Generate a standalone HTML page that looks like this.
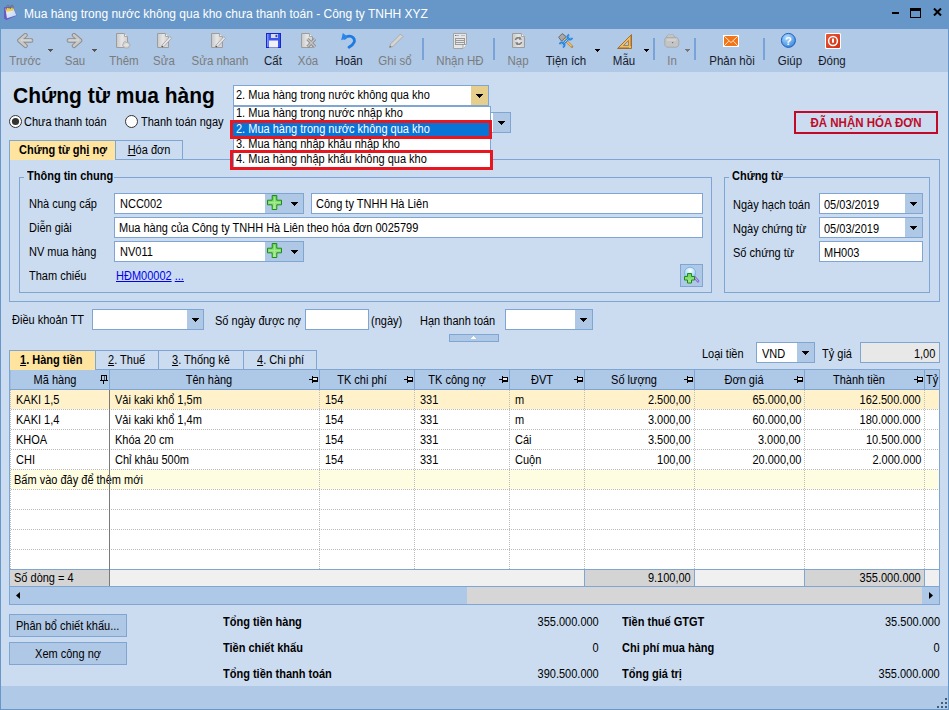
<!DOCTYPE html>
<html><head><meta charset="utf-8">
<style>
*{box-sizing:border-box;margin:0;padding:0}
html,body{width:949px;height:710px;overflow:hidden;background:#CBDCF0;font-family:"Liberation Sans",sans-serif;font-size:11px;color:#000;position:relative}
.a{position:absolute}
.t{position:absolute;white-space:nowrap}
u{text-decoration:underline}
</style></head>
<body>
<div class="a" style="left:0px;top:0px;width:949px;height:29px;background:#6797C8;"></div>
<div class="t" style="left:24px;top:6.84px;font-size:12px;line-height:14px;transform:scaleX(1.0000);transform-origin:0 0;color:#fff;">Mua hàng trong nước không qua kho chưa thanh toán - Công ty TNHH XYZ</div>
<svg class="a" style="left:0px;top:0px" width="20" height="22" viewBox="0 0 20 22"><defs><linearGradient id="pg" x1="0" y1="0" x2="1" y2="1"><stop offset="0" stop-color="#F4F8FF"/><stop offset="1" stop-color="#B8D4F4"/></linearGradient></defs><path d="M4 7.2L12.6 6.4L16.8 15.6L6.4 19.9L4.1 18.6Z" fill="#6A58C8"/><path d="M5.6 8.6L13 7.8L16.4 15.2L6.9 18.2Z" fill="url(#pg)"/><path d="M5.6 8.6L13 7.8L13.9 10.6L6 11.8Z" fill="#F2CC48"/><path d="M6.6 9.5C6 7 6.6 5.2 8 5.2C9.2 5.2 9.4 7 9 8.8M10.6 9C10.2 6.8 10.8 5 12 5C13.2 5 13.4 6.8 13 8.6" fill="none" stroke="#707070" stroke-width="0.9"/></svg>
<div class="a" style="left:892px;top:12px;width:7px;height:2px;background:#000;"></div>
<div class="a" style="left:910px;top:8px;width:11px;height:10px;border:1px solid #000;border-top-width:3px"></div>
<svg class="a" style="left:933px;top:8px" width="9" height="8" viewBox="0 0 9 8"><path d="M1 0.5L8 7.5M8 0.5L1 7.5" stroke="#000" stroke-width="2"/></svg>
<div class="a" style="left:0px;top:29px;width:949px;height:43px;background:#AFC9E7;"></div>
<div class="t" style="left:-75.5px;width:200px;text-align:center;top:53.77px;font-size:12.5px;line-height:15px;transform:scaleX(0.9200);transform-origin:50% 0;color:#7C7C7C;">Trước</div>
<div class="t" style="left:-25px;width:200px;text-align:center;top:53.77px;font-size:12.5px;line-height:15px;transform:scaleX(0.9200);transform-origin:50% 0;color:#7C7C7C;">Sau</div>
<div class="t" style="left:24.299999999999997px;width:200px;text-align:center;top:53.77px;font-size:12.5px;line-height:15px;transform:scaleX(0.9200);transform-origin:50% 0;color:#7C7C7C;">Thêm</div>
<div class="t" style="left:64px;width:200px;text-align:center;top:53.77px;font-size:12.5px;line-height:15px;transform:scaleX(0.9200);transform-origin:50% 0;color:#7C7C7C;">Sửa</div>
<div class="t" style="left:119.5px;width:200px;text-align:center;top:53.77px;font-size:12.5px;line-height:15px;transform:scaleX(0.9200);transform-origin:50% 0;color:#7C7C7C;">Sửa nhanh</div>
<div class="t" style="left:172.5px;width:200px;text-align:center;top:53.77px;font-size:12.5px;line-height:15px;transform:scaleX(0.9200);transform-origin:50% 0;color:#1A1A2A;">Cất</div>
<div class="t" style="left:207.5px;width:200px;text-align:center;top:53.77px;font-size:12.5px;line-height:15px;transform:scaleX(0.9200);transform-origin:50% 0;color:#7C7C7C;">Xóa</div>
<div class="t" style="left:248.7px;width:200px;text-align:center;top:53.77px;font-size:12.5px;line-height:15px;transform:scaleX(0.9200);transform-origin:50% 0;color:#1A1A2A;">Hoãn</div>
<div class="t" style="left:295px;width:200px;text-align:center;top:53.77px;font-size:12.5px;line-height:15px;transform:scaleX(0.9200);transform-origin:50% 0;color:#7C7C7C;">Ghi sổ</div>
<div class="t" style="left:360px;width:200px;text-align:center;top:53.77px;font-size:12.5px;line-height:15px;transform:scaleX(0.9200);transform-origin:50% 0;color:#7C7C7C;">Nhận HĐ</div>
<div class="t" style="left:418px;width:200px;text-align:center;top:53.77px;font-size:12.5px;line-height:15px;transform:scaleX(0.9200);transform-origin:50% 0;color:#7C7C7C;">Nạp</div>
<div class="t" style="left:466px;width:200px;text-align:center;top:53.77px;font-size:12.5px;line-height:15px;transform:scaleX(0.9200);transform-origin:50% 0;color:#1A1A2A;">Tiện ích</div>
<div class="t" style="left:524px;width:200px;text-align:center;top:53.77px;font-size:12.5px;line-height:15px;transform:scaleX(0.9200);transform-origin:50% 0;color:#1A1A2A;">Mẫu</div>
<div class="t" style="left:571.7px;width:200px;text-align:center;top:53.77px;font-size:12.5px;line-height:15px;transform:scaleX(0.9200);transform-origin:50% 0;color:#7C7C7C;">In</div>
<div class="t" style="left:631.6px;width:200px;text-align:center;top:53.77px;font-size:12.5px;line-height:15px;transform:scaleX(0.9200);transform-origin:50% 0;color:#1A1A2A;">Phản hồi</div>
<div class="t" style="left:689.5px;width:200px;text-align:center;top:53.77px;font-size:12.5px;line-height:15px;transform:scaleX(0.9200);transform-origin:50% 0;color:#1A1A2A;">Giúp</div>
<div class="t" style="left:732px;width:200px;text-align:center;top:53.77px;font-size:12.5px;line-height:15px;transform:scaleX(0.9200);transform-origin:50% 0;color:#1A1A2A;">Đóng</div>
<svg class="a" style="left:48px;top:49px" width="5" height="3" shape-rendering="crispEdges"><rect x="0" y="0" width="5" height="1" fill="#555"/><rect x="1" y="1" width="3" height="1" fill="#555"/><rect x="2" y="2" width="1" height="1" fill="#555"/></svg>
<svg class="a" style="left:92px;top:49px" width="5" height="3" shape-rendering="crispEdges"><rect x="0" y="0" width="5" height="1" fill="#555"/><rect x="1" y="1" width="3" height="1" fill="#555"/><rect x="2" y="2" width="1" height="1" fill="#555"/></svg>
<svg class="a" style="left:595px;top:49px" width="5" height="3" shape-rendering="crispEdges"><rect x="0" y="0" width="5" height="1" fill="#000"/><rect x="1" y="1" width="3" height="1" fill="#000"/><rect x="2" y="2" width="1" height="1" fill="#000"/></svg>
<svg class="a" style="left:644px;top:49px" width="5" height="3" shape-rendering="crispEdges"><rect x="0" y="0" width="5" height="1" fill="#000"/><rect x="1" y="1" width="3" height="1" fill="#000"/><rect x="2" y="2" width="1" height="1" fill="#000"/></svg>
<svg class="a" style="left:685px;top:49px" width="5" height="3" shape-rendering="crispEdges"><rect x="0" y="0" width="5" height="1" fill="#777"/><rect x="1" y="1" width="3" height="1" fill="#777"/><rect x="2" y="2" width="1" height="1" fill="#777"/></svg>
<div class="a" style="left:422px;top:38px;width:2px;height:22px;background:#78A2D8;"></div>
<div class="a" style="left:493px;top:38px;width:2px;height:22px;background:#78A2D8;"></div>
<div class="a" style="left:653px;top:38px;width:2px;height:22px;background:#78A2D8;"></div>
<div class="a" style="left:694px;top:38px;width:2px;height:22px;background:#78A2D8;"></div>
<div class="a" style="left:763px;top:38px;width:2px;height:22px;background:#78A2D8;"></div>
<svg class="a" style="left:17px;top:33px" width="17" height="16" viewBox="0 0 17 16"><path d="M8.5 2.2L2.4 7.5L8.5 12.8M2.4 7.5H14.2" fill="none" stroke="#8A8A8A" stroke-width="4.4" stroke-linecap="round" stroke-linejoin="round"/><path d="M8.5 2.2L2.4 7.5L8.5 12.8M2.4 7.5H14.2" fill="none" stroke="#C9C9C9" stroke-width="2.6" stroke-linecap="round" stroke-linejoin="round"/><path d="M4 7H14.2" stroke="#E6E6E6" stroke-width="0.8"/></svg>
<svg class="a" style="left:66px;top:33px" width="17" height="16" viewBox="0 0 17 16"><path d="M8 2.2L14.1 7.5L8 12.8M14.1 7.5H2.8" fill="none" stroke="#8A8A8A" stroke-width="4.4" stroke-linecap="round" stroke-linejoin="round"/><path d="M8 2.2L14.1 7.5L8 12.8M14.1 7.5H2.8" fill="none" stroke="#C9C9C9" stroke-width="2.6" stroke-linecap="round" stroke-linejoin="round"/><path d="M13 7H2.8" stroke="#E6E6E6" stroke-width="0.8"/></svg>
<svg class="a" style="left:116px;top:33px" width="16" height="16" viewBox="0 0 16 16"><defs><linearGradient id="dg" x1="0" x2="1"><stop offset="0" stop-color="#C8C8C8"/><stop offset="0.5" stop-color="#E6E6E6"/><stop offset="1" stop-color="#CFCFCF"/></linearGradient></defs><path d="M0.5 0.5H8.5L11.5 3.5V14.5H0.5Z" fill="url(#dg)" stroke="#9C9C9C"/><path d="M8.5 0.5V3.5H11.5" fill="#F2F2F2" stroke="#A8A8A8"/><path d="M7.5 9.5L9 8.5L10.5 9.5L12.5 9L13 11L14.5 12L13 13.5L12.5 15H9L7.5 14L6.5 12.5Z" fill="#CFCFCF" stroke="#A6A6A6" stroke-width="0.7"/><ellipse cx="10.5" cy="12" rx="2.3" ry="1.8" fill="#E2E2E2"/></svg>
<svg class="a" style="left:157px;top:33px" width="16" height="16" viewBox="0 0 16 16"><defs><linearGradient id="dg" x1="0" x2="1"><stop offset="0" stop-color="#C8C8C8"/><stop offset="0.5" stop-color="#E6E6E6"/><stop offset="1" stop-color="#CFCFCF"/></linearGradient></defs><path d="M0.5 0.5H8.5L11.5 3.5V14.5H0.5Z" fill="url(#dg)" stroke="#9C9C9C"/><path d="M8.5 0.5V3.5H11.5" fill="#F2F2F2" stroke="#A8A8A8"/><path d="M5 12.2L12.8 3.6L14.6 5.2L6.8 13.8L4.6 14.4Z" fill="#E4E4E4" stroke="#A0A0A0" stroke-width="0.8"/><circle cx="5.3" cy="13.6" r="0.8" fill="#555"/></svg>
<svg class="a" style="left:211px;top:33px" width="16" height="16" viewBox="0 0 16 16"><defs><linearGradient id="dg" x1="0" x2="1"><stop offset="0" stop-color="#C8C8C8"/><stop offset="0.5" stop-color="#E6E6E6"/><stop offset="1" stop-color="#CFCFCF"/></linearGradient></defs><path d="M0.5 0.5H8.5L11.5 3.5V14.5H0.5Z" fill="url(#dg)" stroke="#9C9C9C"/><path d="M8.5 0.5V3.5H11.5" fill="#F2F2F2" stroke="#A8A8A8"/><path d="M5 12.2L12.8 3.6L14.6 5.2L6.8 13.8L4.6 14.4Z" fill="#E4E4E4" stroke="#A0A0A0" stroke-width="0.8"/><circle cx="5.3" cy="13.6" r="0.8" fill="#555"/></svg>
<svg class="a" style="left:266px;top:33px" width="15" height="15" viewBox="0 0 15 15"><rect x="0.5" y="0.5" width="14" height="14" fill="#3A55EE" stroke="#1428C8"/><rect x="1" y="1" width="1.5" height="13" fill="#7D90F5"/><rect x="5" y="1" width="7" height="4" fill="#D9D9E4"/><rect x="9.5" y="1.8" width="1.8" height="2.4" fill="#2A45E0"/><rect x="3" y="7.5" width="9" height="7" fill="#F1F1F4"/></svg>
<svg class="a" style="left:301px;top:33px" width="16" height="16" viewBox="0 0 16 16"><defs><linearGradient id="dg" x1="0" x2="1"><stop offset="0" stop-color="#C8C8C8"/><stop offset="0.5" stop-color="#E6E6E6"/><stop offset="1" stop-color="#CFCFCF"/></linearGradient></defs><path d="M0.5 0.5H8.5L11.5 3.5V14.5H0.5Z" fill="url(#dg)" stroke="#9C9C9C"/><path d="M8.5 0.5V3.5H11.5" fill="#F2F2F2" stroke="#A8A8A8"/><path d="M6.5 6L14 13.8M14 6L6.5 13.8" stroke="#8C8C8C" stroke-width="3.2"/><path d="M6.5 6L14 13.8M14 6L6.5 13.8" stroke="#C4C4C4" stroke-width="1.4"/></svg>
<svg class="a" style="left:340px;top:32px" width="17" height="17" viewBox="0 0 17 17"><path d="M4.5 6.2C7 3.6 11 3.4 13.2 5.8C15.6 8.4 14.6 12.2 9 15.2" fill="none" stroke="#1E7BE0" stroke-width="2.8" stroke-linecap="round"/><path d="M1.2 8.3L2.8 1L8.6 5.4Z" fill="#2A86E8"/></svg>
<svg class="a" style="left:388px;top:33px" width="16" height="16" viewBox="0 0 16 16"><path d="M1.5 14.5L2.5 11L12.5 1L15 3.5L5 13.5Z" fill="#D4D4D4" stroke="#A6A6A6" stroke-width="0.9" stroke-linejoin="round"/><path d="M1.5 14.5L2 12.5L3.5 14Z" fill="#6A6A6A"/></svg>
<svg class="a" style="left:453px;top:33px" width="15" height="16" viewBox="0 0 15 16"><path d="M0.5 0.5H13.5V11.5L10 15.5H0.5Z" fill="#E6E6E6" stroke="#A4A4A4"/><path d="M10 15.5V11.5H13.5" fill="#F8F8F8" stroke="#A4A4A4"/><rect x="2" y="2" width="1.5" height="1" fill="#777"/><rect x="4.5" y="2" width="1" height="1" fill="#777"/><path d="M8 2.5H12" stroke="#BBB"/><rect x="2.5" y="5.5" width="9" height="6" fill="none" stroke="#9A9A9A"/><path d="M2.5 7.5H11.5M2.5 9.5H11.5" stroke="#9A9A9A"/></svg>
<svg class="a" style="left:512px;top:33px" width="14" height="16" viewBox="0 0 14 16"><defs><linearGradient id="dg" x1="0" x2="1"><stop offset="0" stop-color="#C8C8C8"/><stop offset="0.5" stop-color="#E6E6E6"/><stop offset="1" stop-color="#CFCFCF"/></linearGradient></defs><path d="M0.5 0.5H9.5L12.5 3.5V14.5H0.5Z" fill="url(#dg)" stroke="#9C9C9C"/><path d="M9.5 0.5V3.5H12.5" fill="#F2F2F2" stroke="#A8A8A8"/><path d="M3.5 7C3.8 4.8 6.8 4 8.6 5.6" fill="none" stroke="#7E7E7E" stroke-width="1.6"/><path d="M7.6 3.6L10 6.4L6.8 6.8Z" fill="#7E7E7E"/><path d="M9.5 9C9.2 11.2 6.2 12 4.4 10.4" fill="none" stroke="#7E7E7E" stroke-width="1.6"/><path d="M5.4 12.4L3 9.6L6.2 9.2Z" fill="#7E7E7E"/></svg>
<svg class="a" style="left:558px;top:33px" width="16" height="16" viewBox="0 0 16 16"><path d="M5 5L14 13.6" stroke="#B8863A" stroke-width="2.6" stroke-linecap="round"/><path d="M5 5L13.6 13.2" stroke="#F2C66C" stroke-width="1.2"/><path d="M0.6 4.2L4.2 0.6L8.2 3.6L3.6 8.2Z" fill="#A8A8A8" stroke="#5A5A5A" stroke-width="0.8" stroke-linejoin="round"/><path d="M4.2 11.8L11.8 4.2" stroke="#2E88E0" stroke-width="2.6"/><path d="M4.2 11.8L11.8 4.2" stroke="#B0DAFF" stroke-width="0.9"/><path d="M11.2 1.6A2.6 2.6 0 1 0 14.4 4.8" fill="none" stroke="#2E88E0" stroke-width="1.7"/><path d="M4.8 14.4A2.6 2.6 0 1 0 1.6 11.2" fill="none" stroke="#2E88E0" stroke-width="1.7"/></svg>
<svg class="a" style="left:617px;top:34px" width="15" height="15" viewBox="0 0 15 15"><path d="M0.5 14.5L14.5 0.5V14.5Z" fill="#EDBE6A" stroke="#A8702A"/><path d="M6.5 11.5L11.5 6.5V11.5Z" fill="#AFC9E7" stroke="#A8702A" stroke-width="0.8"/><path d="M3 14.5V13M5 14.5V13M7 14.5V13M9 14.5V13M11 14.5V13M14.5 11H13M14.5 9H13M14.5 7H13M14.5 5H13M14.5 3H13" stroke="#8A5A20" stroke-width="0.8"/></svg>
<svg class="a" style="left:664px;top:34px" width="16" height="15" viewBox="0 0 16 15"><path d="M2 3.5L4 0.8H9.5L10.5 3.5Z" fill="#CFCFCF" stroke="#A8A8A8" stroke-width="0.8"/><path d="M0.8 6C0.8 4 2 3.2 4 3.2H11C13.5 3.2 14.8 4.8 14.8 7.5V10C14.8 12 13.5 13.2 11.5 13.2H4C2 13.2 0.8 12 0.8 10Z" fill="#C4C4C4" stroke="#A2A2A2" stroke-width="0.8"/><path d="M3 6H12" stroke="#DADADA" stroke-width="1.2"/><rect x="8" y="8" width="1.2" height="1.2" fill="#777"/></svg>
<svg class="a" style="left:723px;top:35px" width="16" height="12" viewBox="0 0 16 12"><rect x="0" y="0" width="16" height="12" fill="#fff"/><rect x="1" y="1" width="14" height="10" fill="#F27418"/><path d="M1.2 1.2L8 7.6L14.8 1.2M1.2 10.8L5.6 6.2M14.8 10.8L10.4 6.2" fill="none" stroke="#FFE8D0" stroke-width="1"/></svg>
<svg class="a" style="left:780px;top:32px" width="17" height="17" viewBox="0 0 17 17"><defs><radialGradient id="hg" cx="0.4" cy="0.3" r="0.7"><stop offset="0" stop-color="#B8DEFF"/><stop offset="1" stop-color="#3A8AE0"/></radialGradient></defs><circle cx="8.4" cy="8.4" r="7" fill="url(#hg)" stroke="#1E5EBE" stroke-width="1"/><text x="8.4" y="12.6" text-anchor="middle" font-family="Liberation Sans" font-weight="bold" font-size="11" fill="#fff">?</text></svg>
<svg class="a" style="left:825px;top:33px" width="16" height="16" viewBox="0 0 16 16"><defs><linearGradient id="cg" x1="0" y1="0" x2="1" y2="1"><stop offset="0" stop-color="#E8553A"/><stop offset="1" stop-color="#D2300C"/></linearGradient></defs><rect x="0" y="0" width="16" height="16" rx="1.5" fill="#fff"/><rect x="1" y="1" width="14" height="14" rx="1" fill="url(#cg)"/><circle cx="8" cy="8" r="4.4" fill="none" stroke="#fff" stroke-width="1.5"/><rect x="7" y="5.6" width="2" height="4.2" rx="0.5" fill="#fff"/></svg>
<div class="a" style="left:0px;top:28px;width:1px;height:682px;background:#6797C8;"></div>
<div class="a" style="left:948px;top:28px;width:1px;height:682px;background:#6797C8;"></div>
<div class="t" style="left:13px;top:82.98px;font-size:22px;line-height:26px;transform:scaleX(0.9545);transform-origin:0 0;font-weight:bold;">Chứng từ mua hàng</div>
<svg class="a" style="left:9px;top:115px" width="14" height="14" viewBox="0 0 14 14"><circle cx="6.5" cy="6.5" r="6" fill="#fff" stroke="#333"/><circle cx="6.5" cy="6.5" r="3.6" fill="#333"/></svg>
<div class="t" style="left:24.2px;top:115.24px;font-size:12px;line-height:14px;transform:scaleX(0.9167);transform-origin:0 0;">Chưa thanh toán</div>
<svg class="a" style="left:125px;top:115px" width="14" height="14" viewBox="0 0 14 14"><circle cx="6.5" cy="6.5" r="6" fill="#fff" stroke="#333"/></svg>
<div class="t" style="left:141.3px;top:115.24px;font-size:12px;line-height:14px;transform:scaleX(0.9167);transform-origin:0 0;">Thanh toán ngay</div>
<div class="a" style="left:794px;top:111px;width:144px;height:23px;border:2px solid #C00A28;"></div>
<div class="t" style="left:766px;width:200px;text-align:center;top:115.97px;font-size:12.5px;line-height:15px;transform:scaleX(0.9200);transform-origin:50% 0;font-weight:bold;color:#C00A28;">ĐÃ NHẬN HÓA ĐƠN</div>
<div class="a" style="left:9px;top:159px;width:931px;height:143px;border:1px solid #7FA5D3;"></div>
<div class="a" style="left:9px;top:140px;width:107px;height:20px;background:#FFE4A0;border:1px solid #7FA5D3;border-bottom:none;border-right:none"></div>
<div class="a" style="left:115px;top:140px;width:68px;height:20px;background:#CBDCF0;border:1px solid #7FA5D3;"></div>
<div class="t" style="left:-37.5px;width:200px;text-align:center;top:142.94px;font-size:12px;line-height:14px;transform:scaleX(0.9167);transform-origin:50% 0;font-weight:bold;">Chứng từ gh<u>i</u> nợ</div>
<div class="t" style="left:49px;width:200px;text-align:center;top:143.34px;font-size:12px;line-height:14px;transform:scaleX(0.9167);transform-origin:50% 0;"><u>H</u>óa đơn</div>
<div class="a" style="left:19px;top:177px;width:693px;height:116px;border:1px solid #7FA5D3;"></div>
<div class="a" style="left:24px;top:170px;width:90px;height:12px;background:#CBDCF0;"></div>
<div class="t" style="left:26.6px;top:169.34px;font-size:12px;line-height:14px;transform:scaleX(0.9167);transform-origin:0 0;font-weight:bold;">Thông tin chung</div>
<div class="a" style="left:724px;top:177px;width:206px;height:116px;border:1px solid #7FA5D3;"></div>
<div class="a" style="left:729px;top:170px;width:54px;height:12px;background:#CBDCF0;"></div>
<div class="t" style="left:731.6px;top:169.34px;font-size:12px;line-height:14px;transform:scaleX(0.9167);transform-origin:0 0;font-weight:bold;">Chứng từ</div>
<div class="t" style="left:28.6px;top:196.94px;font-size:12px;line-height:14px;transform:scaleX(0.9167);transform-origin:0 0;">Nhà cung cấp</div>
<div class="t" style="left:28.6px;top:221.04px;font-size:12px;line-height:14px;transform:scaleX(0.9167);transform-origin:0 0;">Diễn giải</div>
<div class="t" style="left:28.6px;top:245.34px;font-size:12px;line-height:14px;transform:scaleX(0.9167);transform-origin:0 0;">NV mua hàng</div>
<div class="t" style="left:28.6px;top:269.04px;font-size:12px;line-height:14px;transform:scaleX(0.9167);transform-origin:0 0;">Tham chiếu</div>
<div class="a" style="left:114px;top:193px;width:190px;height:21px;background:#fff;border:1px solid #7FA5D3;"></div>
<div class="a" style="left:265px;top:194px;width:38px;height:19px;background:#AFC8E6;"></div>
<svg class="a" style="left:267px;top:195px" width="15" height="15" viewBox="0 0 15 15"><defs><linearGradient id="gp" x1="0" y1="0" x2="0" y2="1"><stop offset="0" stop-color="#6CD056"/><stop offset="1" stop-color="#A8EE90"/></linearGradient></defs><path d="M5.2 0.5H9.8V5.2H14.5V9.8H9.8V14.5H5.2V9.8H0.5V5.2H5.2Z" fill="url(#gp)" stroke="#1C8A1C" stroke-width="1"/><path d="M7.5 2V13M2 7.5H13" stroke="#B8F4A8" stroke-width="1" opacity="0.6"/></svg>
<svg class="a" style="left:291px;top:202px" width="7" height="4" shape-rendering="crispEdges"><rect x="0" y="0" width="7" height="1" fill="#000"/><rect x="1" y="1" width="5" height="1" fill="#000"/><rect x="2" y="2" width="3" height="1" fill="#000"/><rect x="3" y="3" width="1" height="1" fill="#000"/></svg>
<div class="t" style="left:120.4px;top:197.14px;font-size:12px;line-height:14px;transform:scaleX(0.9167);transform-origin:0 0;">NCC002</div>
<div class="a" style="left:114px;top:241px;width:190px;height:21px;background:#fff;border:1px solid #7FA5D3;"></div>
<div class="a" style="left:265px;top:242px;width:38px;height:19px;background:#AFC8E6;"></div>
<svg class="a" style="left:267px;top:243px" width="15" height="15" viewBox="0 0 15 15"><defs><linearGradient id="gp" x1="0" y1="0" x2="0" y2="1"><stop offset="0" stop-color="#6CD056"/><stop offset="1" stop-color="#A8EE90"/></linearGradient></defs><path d="M5.2 0.5H9.8V5.2H14.5V9.8H9.8V14.5H5.2V9.8H0.5V5.2H5.2Z" fill="url(#gp)" stroke="#1C8A1C" stroke-width="1"/><path d="M7.5 2V13M2 7.5H13" stroke="#B8F4A8" stroke-width="1" opacity="0.6"/></svg>
<svg class="a" style="left:291px;top:250px" width="7" height="4" shape-rendering="crispEdges"><rect x="0" y="0" width="7" height="1" fill="#000"/><rect x="1" y="1" width="5" height="1" fill="#000"/><rect x="2" y="2" width="3" height="1" fill="#000"/><rect x="3" y="3" width="1" height="1" fill="#000"/></svg>
<div class="t" style="left:120.4px;top:245.14px;font-size:12px;line-height:14px;transform:scaleX(0.9167);transform-origin:0 0;">NV011</div>
<div class="a" style="left:311px;top:193px;width:392px;height:21px;background:#fff;border:1px solid #7FA5D3;"></div>
<div class="t" style="left:316px;top:197.24px;font-size:12px;line-height:14px;transform:scaleX(0.9167);transform-origin:0 0;">Công ty TNHH Hà Liên</div>
<div class="a" style="left:114px;top:217px;width:589px;height:21px;background:#fff;border:1px solid #7FA5D3;"></div>
<div class="t" style="left:119.3px;top:221.44px;font-size:12px;line-height:14px;transform:scaleX(0.9167);transform-origin:0 0;">Mua hàng của Công ty TNHH Hà Liên theo hóa đơn 0025799</div>
<div class="t" style="left:116.2px;top:268.64px;font-size:12px;line-height:14px;transform:scaleX(0.9167);transform-origin:0 0;color:#0000EE;"><u>HĐM00002</u> <u>...</u></div>
<div class="a" style="left:680px;top:264px;width:23px;height:23px;background:#AFC8E6;border:1px solid #7FA5D3;"></div>
<svg class="a" style="left:682px;top:266px" width="18" height="18" viewBox="0 0 18 18"><defs><radialGradient id="mg" cx="0.5" cy="0.3" r="0.7"><stop offset="0" stop-color="#FAFDFF"/><stop offset="1" stop-color="#8CC4F0"/></radialGradient></defs><path d="M12.2 10.8L16 15.2" stroke="#8A70D8" stroke-width="2.8" stroke-linecap="round"/><path d="M12.2 10.8L16 15.2" stroke="#C0B0F0" stroke-width="1"/><circle cx="8" cy="6.8" r="5.6" fill="url(#mg)" stroke="#6AAEE6" stroke-width="0.8"/><path d="M5.5 7.5H9.5V10.5H12.5V14H9.5V17H5.5V14H2.5V10.5H5.5Z" fill="url(#gp)" stroke="#1C8A1C" stroke-width="1"/></svg>
<div class="t" style="left:733px;top:197.64px;font-size:12px;line-height:14px;transform:scaleX(0.9167);transform-origin:0 0;">Ngày hạch toán</div>
<div class="t" style="left:733px;top:221.64px;font-size:12px;line-height:14px;transform:scaleX(0.9167);transform-origin:0 0;">Ngày chứng từ</div>
<div class="t" style="left:733px;top:245.64px;font-size:12px;line-height:14px;transform:scaleX(0.9167);transform-origin:0 0;">Số chứng từ</div>
<div class="a" style="left:819px;top:193px;width:104px;height:21px;background:#fff;border:1px solid #7FA5D3;"></div>
<div class="a" style="left:905px;top:194px;width:17px;height:19px;background:#AFC8E6;"></div>
<svg class="a" style="left:910px;top:202px" width="7" height="4" shape-rendering="crispEdges"><rect x="0" y="0" width="7" height="1" fill="#000"/><rect x="1" y="1" width="5" height="1" fill="#000"/><rect x="2" y="2" width="3" height="1" fill="#000"/><rect x="3" y="3" width="1" height="1" fill="#000"/></svg>
<div class="t" style="left:823.5px;top:197.64px;font-size:12px;line-height:14px;transform:scaleX(0.9167);transform-origin:0 0;">05/03/2019</div>
<div class="a" style="left:819px;top:217px;width:104px;height:21px;background:#fff;border:1px solid #7FA5D3;"></div>
<div class="a" style="left:905px;top:218px;width:17px;height:19px;background:#AFC8E6;"></div>
<svg class="a" style="left:910px;top:226px" width="7" height="4" shape-rendering="crispEdges"><rect x="0" y="0" width="7" height="1" fill="#000"/><rect x="1" y="1" width="5" height="1" fill="#000"/><rect x="2" y="2" width="3" height="1" fill="#000"/><rect x="3" y="3" width="1" height="1" fill="#000"/></svg>
<div class="t" style="left:823.5px;top:221.64px;font-size:12px;line-height:14px;transform:scaleX(0.9167);transform-origin:0 0;">05/03/2019</div>
<div class="a" style="left:819px;top:241px;width:104px;height:21px;background:#fff;border:1px solid #7FA5D3;"></div>
<div class="t" style="left:823.5px;top:245.64px;font-size:12px;line-height:14px;transform:scaleX(0.9167);transform-origin:0 0;">MH003</div>
<div class="a" style="left:470px;top:112px;width:41px;height:21px;background:#fff;border:1px solid #7FA5D3;"></div>
<div class="a" style="left:493px;top:113px;width:17px;height:19px;background:#AFC8E6;"></div>
<svg class="a" style="left:498px;top:121px" width="7" height="4" shape-rendering="crispEdges"><rect x="0" y="0" width="7" height="1" fill="#000"/><rect x="1" y="1" width="5" height="1" fill="#000"/><rect x="2" y="2" width="3" height="1" fill="#000"/><rect x="3" y="3" width="1" height="1" fill="#000"/></svg>
<div class="a" style="left:233px;top:85px;width:256px;height:21px;background:#fff;border:1px solid #7FA5D3;"></div>
<div class="a" style="left:471px;top:86px;width:17px;height:19px;background:#E6CE8C;"></div>
<svg class="a" style="left:476px;top:94px" width="7" height="4" shape-rendering="crispEdges"><rect x="0" y="0" width="7" height="1" fill="#000"/><rect x="1" y="1" width="5" height="1" fill="#000"/><rect x="2" y="2" width="3" height="1" fill="#000"/><rect x="3" y="3" width="1" height="1" fill="#000"/></svg>
<div class="t" style="left:236.4px;top:87.94px;font-size:12px;line-height:14px;transform:scaleX(0.9167);transform-origin:0 0;">2. Mua hàng trong nước không qua kho</div>
<div class="a" style="left:233px;top:106px;width:258px;height:62px;background:#fff;border:1px solid #7FA5D3;"></div>
<div class="a" style="left:233px;top:123px;width:257px;height:13px;background:#0A73D6;"></div>
<div class="t" style="left:236.4px;top:106.44px;font-size:12px;line-height:14px;transform:scaleX(0.9167);transform-origin:0 0;">1. Mua hàng trong nước nhập kho</div>
<div class="t" style="left:236.4px;top:121.64px;font-size:12px;line-height:14px;transform:scaleX(0.9167);transform-origin:0 0;color:#fff;">2. Mua hàng trong nước không qua kho</div>
<div class="t" style="left:236.4px;top:137.04px;font-size:12px;line-height:14px;transform:scaleX(0.9167);transform-origin:0 0;">3. Mua hàng nhập khẩu nhập kho</div>
<div class="t" style="left:236.4px;top:151.64px;font-size:12px;line-height:14px;transform:scaleX(0.9167);transform-origin:0 0;">4. Mua hàng nhập khẩu không qua kho</div>
<div class="a" style="left:230px;top:120px;width:262px;height:19px;border:3px solid #E8161E;"></div>
<div class="a" style="left:230px;top:150px;width:263px;height:20px;border:3px solid #E8161E;"></div>
<div class="t" style="left:12px;top:313.24px;font-size:12px;line-height:14px;transform:scaleX(0.9167);transform-origin:0 0;">Điều khoản TT</div>
<div class="a" style="left:92px;top:309px;width:112px;height:21px;background:#fff;border:1px solid #7FA5D3;"></div>
<div class="a" style="left:187px;top:310px;width:16px;height:19px;background:#AFC8E6;"></div>
<svg class="a" style="left:192px;top:318px" width="7" height="4" shape-rendering="crispEdges"><rect x="0" y="0" width="7" height="1" fill="#000"/><rect x="1" y="1" width="5" height="1" fill="#000"/><rect x="2" y="2" width="3" height="1" fill="#000"/><rect x="3" y="3" width="1" height="1" fill="#000"/></svg>
<div class="t" style="left:215.2px;top:313.64px;font-size:12px;line-height:14px;transform:scaleX(0.9167);transform-origin:0 0;">Số ngày được nợ</div>
<div class="a" style="left:305px;top:309px;width:64px;height:21px;background:#fff;border:1px solid #7FA5D3;"></div>
<div class="t" style="left:371px;top:313.64px;font-size:12px;line-height:14px;transform:scaleX(0.9167);transform-origin:0 0;">(ngày)</div>
<div class="t" style="left:419.7px;top:313.64px;font-size:12px;line-height:14px;transform:scaleX(0.9167);transform-origin:0 0;">Hạn thanh toán</div>
<div class="a" style="left:505px;top:309px;width:88px;height:21px;background:#fff;border:1px solid #7FA5D3;"></div>
<div class="a" style="left:575px;top:310px;width:17px;height:19px;background:#AFC8E6;"></div>
<svg class="a" style="left:580px;top:318px" width="7" height="4" shape-rendering="crispEdges"><rect x="0" y="0" width="7" height="1" fill="#000"/><rect x="1" y="1" width="5" height="1" fill="#000"/><rect x="2" y="2" width="3" height="1" fill="#000"/><rect x="3" y="3" width="1" height="1" fill="#000"/></svg>
<div class="a" style="left:449px;top:334px;width:50px;height:8px;background:#AFC8E6;border:1px solid #7FA5D3;"></div>
<svg class="a" style="left:471px;top:336px" width="5" height="3" shape-rendering="crispEdges"><rect x="0" y="2" width="5" height="1" fill="#fff"/><rect x="1" y="1" width="3" height="1" fill="#fff"/><rect x="2" y="0" width="1" height="1" fill="#fff"/></svg>
<div class="a" style="left:9px;top:350px;width:87px;height:20px;background:#FFE4A0;border:1px solid #7FA5D3;border-bottom:none;border-right:none"></div>
<div class="a" style="left:95px;top:350px;width:64px;height:20px;background:#CBDCF0;border:1px solid #7FA5D3;"></div>
<div class="a" style="left:158px;top:350px;width:86px;height:20px;background:#CBDCF0;border:1px solid #7FA5D3;"></div>
<div class="a" style="left:243px;top:350px;width:74px;height:20px;background:#CBDCF0;border:1px solid #7FA5D3;"></div>
<div class="t" style="left:20.2px;top:352.94px;font-size:12px;line-height:14px;transform:scaleX(0.9167);transform-origin:0 0;font-weight:bold;"><u>1</u>. Hàng tiền</div>
<div class="t" style="left:108px;top:352.94px;font-size:12px;line-height:14px;transform:scaleX(0.9167);transform-origin:0 0;"><u>2</u>. Thuế</div>
<div class="t" style="left:172px;top:352.94px;font-size:12px;line-height:14px;transform:scaleX(0.9167);transform-origin:0 0;"><u>3</u>. Thống kê</div>
<div class="t" style="left:257px;top:352.94px;font-size:12px;line-height:14px;transform:scaleX(0.9167);transform-origin:0 0;"><u>4</u>. Chi phí</div>
<div class="t" style="left:701.5px;top:347.04px;font-size:12px;line-height:14px;transform:scaleX(0.9167);transform-origin:0 0;">Loại tiền</div>
<div class="a" style="left:756px;top:342px;width:59px;height:21px;background:#fff;border:1px solid #7FA5D3;"></div>
<div class="a" style="left:797px;top:343px;width:17px;height:19px;background:#AFC8E6;"></div>
<svg class="a" style="left:802px;top:351px" width="7" height="4" shape-rendering="crispEdges"><rect x="0" y="0" width="7" height="1" fill="#000"/><rect x="1" y="1" width="5" height="1" fill="#000"/><rect x="2" y="2" width="3" height="1" fill="#000"/><rect x="3" y="3" width="1" height="1" fill="#000"/></svg>
<div class="t" style="left:762.3px;top:346.64px;font-size:12px;line-height:14px;transform:scaleX(0.9167);transform-origin:0 0;">VND</div>
<div class="t" style="left:821.5px;top:347.04px;font-size:12px;line-height:14px;transform:scaleX(0.9167);transform-origin:0 0;">Tỷ giá</div>
<div class="a" style="left:860px;top:342px;width:80px;height:21px;background:#E8E8E8;border:1px solid #7FA5D3;"></div>
<div class="t" style="right:13.399999999999977px;top:346.64px;font-size:12px;line-height:14px;transform:scaleX(0.9167);transform-origin:100% 0;">1,00</div>
<div class="a" style="left:9px;top:369px;width:931px;height:236px;background:#fff;border:1px solid #7FA5D3;"></div>
<div class="a" style="left:10px;top:370px;width:929px;height:19px;background:#AEC8E8;"></div>
<div class="a" style="left:10px;top:389px;width:929px;height:1px;background:#7FA5D3;"></div>
<div class="a" style="left:10px;top:370px;width:1px;height:19px;background:#9DBCE0;"></div>
<div class="a" style="left:9px;top:370px;width:1px;height:1px;background:#7FA5D3;"></div>
<div class="a" style="left:10px;top:369px;width:85px;height:1px;background:#FFE4A0;"></div>
<div class="a" style="left:109px;top:370px;width:1px;height:19px;background:#7FA5D3;"></div>
<div class="a" style="left:319px;top:370px;width:1px;height:19px;background:#7FA5D3;"></div>
<div class="a" style="left:414px;top:370px;width:1px;height:19px;background:#7FA5D3;"></div>
<div class="a" style="left:509px;top:370px;width:1px;height:19px;background:#7FA5D3;"></div>
<div class="a" style="left:584px;top:370px;width:1px;height:19px;background:#7FA5D3;"></div>
<div class="a" style="left:694px;top:370px;width:1px;height:19px;background:#7FA5D3;"></div>
<div class="a" style="left:804px;top:370px;width:1px;height:19px;background:#7FA5D3;"></div>
<div class="a" style="left:924px;top:370px;width:1px;height:19px;background:#7FA5D3;"></div>
<div class="t" style="left:-45.5px;width:200px;text-align:center;top:372.64px;font-size:12px;line-height:14px;transform:scaleX(0.9167);transform-origin:50% 0;">Mã hàng</div>
<svg class="a" style="left:100px;top:375px" width="8" height="9" viewBox="0 0 8 9"><rect x="1" y="0" width="6" height="1" fill="#000"/><rect x="1" y="0" width="1" height="5" fill="#000"/><rect x="6" y="0" width="1" height="5" fill="#000"/><rect x="4" y="1" width="1" height="4" fill="#555"/><rect x="0" y="5" width="8" height="1" fill="#000"/><rect x="3" y="6" width="1" height="3" fill="#000"/></svg>
<div class="t" style="left:109.0px;width:200px;text-align:center;top:372.64px;font-size:12px;line-height:14px;transform:scaleX(0.9167);transform-origin:50% 0;">Tên hàng</div>
<svg class="a" style="left:309px;top:376px" width="10" height="7" viewBox="0 0 10 7"><rect x="0" y="3" width="3" height="1" fill="#000"/><rect x="3" y="0" width="1" height="7" fill="#000"/><rect x="4" y="1" width="5" height="1" fill="#000"/><rect x="4" y="4" width="5" height="2" fill="#000"/><rect x="8" y="1" width="1" height="5" fill="#000"/><rect x="4" y="2" width="4" height="2" fill="#E8E8E8"/></svg>
<div class="t" style="left:261.5px;width:200px;text-align:center;top:372.64px;font-size:12px;line-height:14px;transform:scaleX(0.9167);transform-origin:50% 0;">TK chi phí</div>
<svg class="a" style="left:404px;top:376px" width="10" height="7" viewBox="0 0 10 7"><rect x="0" y="3" width="3" height="1" fill="#000"/><rect x="3" y="0" width="1" height="7" fill="#000"/><rect x="4" y="1" width="5" height="1" fill="#000"/><rect x="4" y="4" width="5" height="2" fill="#000"/><rect x="8" y="1" width="1" height="5" fill="#000"/><rect x="4" y="2" width="4" height="2" fill="#E8E8E8"/></svg>
<div class="t" style="left:356.5px;width:200px;text-align:center;top:372.64px;font-size:12px;line-height:14px;transform:scaleX(0.9167);transform-origin:50% 0;">TK công nợ</div>
<svg class="a" style="left:499px;top:376px" width="10" height="7" viewBox="0 0 10 7"><rect x="0" y="3" width="3" height="1" fill="#000"/><rect x="3" y="0" width="1" height="7" fill="#000"/><rect x="4" y="1" width="5" height="1" fill="#000"/><rect x="4" y="4" width="5" height="2" fill="#000"/><rect x="8" y="1" width="1" height="5" fill="#000"/><rect x="4" y="2" width="4" height="2" fill="#E8E8E8"/></svg>
<div class="t" style="left:441.5px;width:200px;text-align:center;top:372.64px;font-size:12px;line-height:14px;transform:scaleX(0.9167);transform-origin:50% 0;">ĐVT</div>
<svg class="a" style="left:574px;top:376px" width="10" height="7" viewBox="0 0 10 7"><rect x="0" y="3" width="3" height="1" fill="#000"/><rect x="3" y="0" width="1" height="7" fill="#000"/><rect x="4" y="1" width="5" height="1" fill="#000"/><rect x="4" y="4" width="5" height="2" fill="#000"/><rect x="8" y="1" width="1" height="5" fill="#000"/><rect x="4" y="2" width="4" height="2" fill="#E8E8E8"/></svg>
<div class="t" style="left:534.0px;width:200px;text-align:center;top:372.64px;font-size:12px;line-height:14px;transform:scaleX(0.9167);transform-origin:50% 0;">Số lượng</div>
<svg class="a" style="left:684px;top:376px" width="10" height="7" viewBox="0 0 10 7"><rect x="0" y="3" width="3" height="1" fill="#000"/><rect x="3" y="0" width="1" height="7" fill="#000"/><rect x="4" y="1" width="5" height="1" fill="#000"/><rect x="4" y="4" width="5" height="2" fill="#000"/><rect x="8" y="1" width="1" height="5" fill="#000"/><rect x="4" y="2" width="4" height="2" fill="#E8E8E8"/></svg>
<div class="t" style="left:644.0px;width:200px;text-align:center;top:372.64px;font-size:12px;line-height:14px;transform:scaleX(0.9167);transform-origin:50% 0;">Đơn giá</div>
<svg class="a" style="left:794px;top:376px" width="10" height="7" viewBox="0 0 10 7"><rect x="0" y="3" width="3" height="1" fill="#000"/><rect x="3" y="0" width="1" height="7" fill="#000"/><rect x="4" y="1" width="5" height="1" fill="#000"/><rect x="4" y="4" width="5" height="2" fill="#000"/><rect x="8" y="1" width="1" height="5" fill="#000"/><rect x="4" y="2" width="4" height="2" fill="#E8E8E8"/></svg>
<div class="t" style="left:759.0px;width:200px;text-align:center;top:372.64px;font-size:12px;line-height:14px;transform:scaleX(0.9167);transform-origin:50% 0;">Thành tiền</div>
<svg class="a" style="left:914px;top:376px" width="10" height="7" viewBox="0 0 10 7"><rect x="0" y="3" width="3" height="1" fill="#000"/><rect x="3" y="0" width="1" height="7" fill="#000"/><rect x="4" y="1" width="5" height="1" fill="#000"/><rect x="4" y="4" width="5" height="2" fill="#000"/><rect x="8" y="1" width="1" height="5" fill="#000"/><rect x="4" y="2" width="4" height="2" fill="#E8E8E8"/></svg>
<div class="t" style="left:926px;top:372.64px;font-size:12px;line-height:14px;transform:scaleX(0.9167);transform-origin:0 0;">Tỷ</div>
<div class="a" style="left:10px;top:390px;width:929px;height:19px;background:#FFF2CA;"></div>
<div class="a" style="left:10px;top:470px;width:929px;height:19px;background:#FFFDE1;"></div>
<div class="a" style="left:11px;top:409px;width:928px;height:1px;background-image:linear-gradient(to right,#BCBCBC 50%,transparent 50%);background-size:2px 1px"></div>
<div class="a" style="left:11px;top:429px;width:928px;height:1px;background-image:linear-gradient(to right,#BCBCBC 50%,transparent 50%);background-size:2px 1px"></div>
<div class="a" style="left:11px;top:449px;width:928px;height:1px;background-image:linear-gradient(to right,#BCBCBC 50%,transparent 50%);background-size:2px 1px"></div>
<div class="a" style="left:11px;top:469px;width:928px;height:1px;background-image:linear-gradient(to right,#BCBCBC 50%,transparent 50%);background-size:2px 1px"></div>
<div class="a" style="left:11px;top:489px;width:928px;height:1px;background-image:linear-gradient(to right,#BCBCBC 50%,transparent 50%);background-size:2px 1px"></div>
<div class="a" style="left:11px;top:509px;width:928px;height:1px;background-image:linear-gradient(to right,#BCBCBC 50%,transparent 50%);background-size:2px 1px"></div>
<div class="a" style="left:11px;top:529px;width:928px;height:1px;background-image:linear-gradient(to right,#BCBCBC 50%,transparent 50%);background-size:2px 1px"></div>
<div class="a" style="left:11px;top:549px;width:928px;height:1px;background-image:linear-gradient(to right,#BCBCBC 50%,transparent 50%);background-size:2px 1px"></div>
<div class="a" style="left:319px;top:390px;width:1px;height:179px;background-image:linear-gradient(to bottom,#BCBCBC 50%,transparent 50%);background-size:1px 2px"></div>
<div class="a" style="left:414px;top:390px;width:1px;height:179px;background-image:linear-gradient(to bottom,#BCBCBC 50%,transparent 50%);background-size:1px 2px"></div>
<div class="a" style="left:509px;top:390px;width:1px;height:179px;background-image:linear-gradient(to bottom,#BCBCBC 50%,transparent 50%);background-size:1px 2px"></div>
<div class="a" style="left:584px;top:390px;width:1px;height:179px;background-image:linear-gradient(to bottom,#BCBCBC 50%,transparent 50%);background-size:1px 2px"></div>
<div class="a" style="left:694px;top:390px;width:1px;height:179px;background-image:linear-gradient(to bottom,#BCBCBC 50%,transparent 50%);background-size:1px 2px"></div>
<div class="a" style="left:804px;top:390px;width:1px;height:179px;background-image:linear-gradient(to bottom,#BCBCBC 50%,transparent 50%);background-size:1px 2px"></div>
<div class="a" style="left:924px;top:390px;width:1px;height:179px;background-image:linear-gradient(to bottom,#BCBCBC 50%,transparent 50%);background-size:1px 2px"></div>
<div class="a" style="left:10px;top:390px;width:1px;height:179px;background-image:linear-gradient(to bottom,#BCBCBC 50%,transparent 50%);background-size:1px 2px"></div>
<div class="t" style="left:15.7px;top:393.44px;font-size:12px;line-height:14px;transform:scaleX(0.9167);transform-origin:0 0;">KAKI 1,5</div>
<div class="t" style="left:115.3px;top:393.44px;font-size:12px;line-height:14px;transform:scaleX(0.9167);transform-origin:0 0;">Vải kaki khổ 1,5m</div>
<div class="t" style="left:325.3px;top:393.44px;font-size:12px;line-height:14px;transform:scaleX(0.9167);transform-origin:0 0;">154</div>
<div class="t" style="left:419.7px;top:393.44px;font-size:12px;line-height:14px;transform:scaleX(0.9167);transform-origin:0 0;">331</div>
<div class="t" style="left:515px;top:393.44px;font-size:12px;line-height:14px;transform:scaleX(0.9167);transform-origin:0 0;">m</div>
<div class="t" style="right:258px;top:393.44px;font-size:12px;line-height:14px;transform:scaleX(0.9167);transform-origin:100% 0;">2.500,00</div>
<div class="t" style="right:148px;top:393.44px;font-size:12px;line-height:14px;transform:scaleX(0.9167);transform-origin:100% 0;">65.000,00</div>
<div class="t" style="right:28px;top:393.44px;font-size:12px;line-height:14px;transform:scaleX(0.9167);transform-origin:100% 0;">162.500.000</div>
<div class="t" style="left:15.7px;top:413.44px;font-size:12px;line-height:14px;transform:scaleX(0.9167);transform-origin:0 0;">KAKI 1,4</div>
<div class="t" style="left:115.3px;top:413.44px;font-size:12px;line-height:14px;transform:scaleX(0.9167);transform-origin:0 0;">Vải kaki khổ 1,4m</div>
<div class="t" style="left:325.3px;top:413.44px;font-size:12px;line-height:14px;transform:scaleX(0.9167);transform-origin:0 0;">154</div>
<div class="t" style="left:419.7px;top:413.44px;font-size:12px;line-height:14px;transform:scaleX(0.9167);transform-origin:0 0;">331</div>
<div class="t" style="left:515px;top:413.44px;font-size:12px;line-height:14px;transform:scaleX(0.9167);transform-origin:0 0;">m</div>
<div class="t" style="right:258px;top:413.44px;font-size:12px;line-height:14px;transform:scaleX(0.9167);transform-origin:100% 0;">3.000,00</div>
<div class="t" style="right:148px;top:413.44px;font-size:12px;line-height:14px;transform:scaleX(0.9167);transform-origin:100% 0;">60.000,00</div>
<div class="t" style="right:28px;top:413.44px;font-size:12px;line-height:14px;transform:scaleX(0.9167);transform-origin:100% 0;">180.000.000</div>
<div class="t" style="left:15.7px;top:433.44px;font-size:12px;line-height:14px;transform:scaleX(0.9167);transform-origin:0 0;">KHOA</div>
<div class="t" style="left:115.3px;top:433.44px;font-size:12px;line-height:14px;transform:scaleX(0.9167);transform-origin:0 0;">Khóa 20 cm</div>
<div class="t" style="left:325.3px;top:433.44px;font-size:12px;line-height:14px;transform:scaleX(0.9167);transform-origin:0 0;">154</div>
<div class="t" style="left:419.7px;top:433.44px;font-size:12px;line-height:14px;transform:scaleX(0.9167);transform-origin:0 0;">331</div>
<div class="t" style="left:515px;top:433.44px;font-size:12px;line-height:14px;transform:scaleX(0.9167);transform-origin:0 0;">Cái</div>
<div class="t" style="right:258px;top:433.44px;font-size:12px;line-height:14px;transform:scaleX(0.9167);transform-origin:100% 0;">3.500,00</div>
<div class="t" style="right:148px;top:433.44px;font-size:12px;line-height:14px;transform:scaleX(0.9167);transform-origin:100% 0;">3.000,00</div>
<div class="t" style="right:28px;top:433.44px;font-size:12px;line-height:14px;transform:scaleX(0.9167);transform-origin:100% 0;">10.500.000</div>
<div class="t" style="left:15.7px;top:453.44px;font-size:12px;line-height:14px;transform:scaleX(0.9167);transform-origin:0 0;">CHI</div>
<div class="t" style="left:115.3px;top:453.44px;font-size:12px;line-height:14px;transform:scaleX(0.9167);transform-origin:0 0;">Chỉ khâu 500m</div>
<div class="t" style="left:325.3px;top:453.44px;font-size:12px;line-height:14px;transform:scaleX(0.9167);transform-origin:0 0;">154</div>
<div class="t" style="left:419.7px;top:453.44px;font-size:12px;line-height:14px;transform:scaleX(0.9167);transform-origin:0 0;">331</div>
<div class="t" style="left:515px;top:453.44px;font-size:12px;line-height:14px;transform:scaleX(0.9167);transform-origin:0 0;">Cuộn</div>
<div class="t" style="right:258px;top:453.44px;font-size:12px;line-height:14px;transform:scaleX(0.9167);transform-origin:100% 0;">100,00</div>
<div class="t" style="right:148px;top:453.44px;font-size:12px;line-height:14px;transform:scaleX(0.9167);transform-origin:100% 0;">20.000,00</div>
<div class="t" style="right:28px;top:453.44px;font-size:12px;line-height:14px;transform:scaleX(0.9167);transform-origin:100% 0;">2.000.000</div>
<div class="t" style="left:13.7px;top:472.84px;font-size:12px;line-height:14px;transform:scaleX(0.9167);transform-origin:0 0;">Bấm vào đây để thêm mới</div>
<div class="a" style="left:10px;top:569px;width:929px;height:1px;background:#7FA5D3;"></div>
<div class="a" style="left:10px;top:570px;width:929px;height:16px;background:#F0F0F0;"></div>
<div class="a" style="left:10px;top:570px;width:99px;height:16px;background:#D4D4D4;"></div>
<div class="a" style="left:585px;top:570px;width:109px;height:16px;background:#D4D4D4;"></div>
<div class="a" style="left:805px;top:570px;width:119px;height:16px;background:#D4D4D4;"></div>
<div class="a" style="left:584px;top:570px;width:1px;height:16px;background:#7FA5D3;"></div>
<div class="a" style="left:694px;top:570px;width:1px;height:16px;background:#7FA5D3;"></div>
<div class="a" style="left:804px;top:570px;width:1px;height:16px;background:#7FA5D3;"></div>
<div class="a" style="left:924px;top:570px;width:1px;height:16px;background:#7FA5D3;"></div>
<div class="a" style="left:109px;top:390px;width:1px;height:196px;background:#7A7A7A;"></div>
<div class="t" style="left:14.4px;top:570.64px;font-size:12px;line-height:14px;transform:scaleX(0.9167);transform-origin:0 0;">Số dòng = 4</div>
<div class="t" style="right:258px;top:570.64px;font-size:12px;line-height:14px;transform:scaleX(0.9167);transform-origin:100% 0;">9.100,00</div>
<div class="t" style="right:28.399999999999977px;top:570.64px;font-size:12px;line-height:14px;transform:scaleX(0.9167);transform-origin:100% 0;">355.000.000</div>
<div class="a" style="left:10px;top:586px;width:929px;height:1px;background:#7FA5D3;"></div>
<div class="a" style="left:10px;top:587px;width:929px;height:17px;background:#D6D6D6;"></div>
<div class="a" style="left:10px;top:587px;width:457px;height:17px;background:#AEC8E8;"></div>
<div class="a" style="left:922px;top:587px;width:17px;height:17px;background:#AEC8E8;"></div>
<svg class="a" style="left:16px;top:592px" width="4" height="7" viewBox="0 0 4 7"><path d="M4 0V7L0 3.5Z" fill="#000"/></svg>
<svg class="a" style="left:929px;top:592px" width="4" height="7" viewBox="0 0 4 7"><path d="M0 0V7L4 3.5Z" fill="#000"/></svg>
<div class="a" style="left:9px;top:614px;width:118px;height:23px;background:#AFC8E6;border:1px solid #7FA5D3;"></div>
<div class="t" style="left:16.4px;top:619.44px;font-size:12px;line-height:14px;transform:scaleX(0.9167);transform-origin:0 0;">Phân bổ chiết khấu...</div>
<div class="a" style="left:9px;top:642px;width:118px;height:23px;background:#AFC8E6;border:1px solid #7FA5D3;"></div>
<div class="t" style="left:-32px;width:200px;text-align:center;top:647.34px;font-size:12px;line-height:14px;transform:scaleX(0.9167);transform-origin:50% 0;">Xem công nợ</div>
<div class="t" style="left:223.2px;top:615.34px;font-size:12px;line-height:14px;transform:scaleX(0.9167);transform-origin:0 0;font-weight:bold;">Tổng tiền hàng</div>
<div class="t" style="left:223.2px;top:641.44px;font-size:12px;line-height:14px;transform:scaleX(0.9167);transform-origin:0 0;font-weight:bold;">Tiền chiết khấu</div>
<div class="t" style="left:223.2px;top:667.44px;font-size:12px;line-height:14px;transform:scaleX(0.9167);transform-origin:0 0;font-weight:bold;">Tổng tiền thanh toán</div>
<div class="t" style="right:350px;top:615.34px;font-size:12px;line-height:14px;transform:scaleX(0.9167);transform-origin:100% 0;">355.000.000</div>
<div class="t" style="right:350px;top:641.44px;font-size:12px;line-height:14px;transform:scaleX(0.9167);transform-origin:100% 0;">0</div>
<div class="t" style="right:350px;top:667.44px;font-size:12px;line-height:14px;transform:scaleX(0.9167);transform-origin:100% 0;">390.500.000</div>
<div class="t" style="left:621.5px;top:615.34px;font-size:12px;line-height:14px;transform:scaleX(0.9167);transform-origin:0 0;font-weight:bold;">Tiền thuế GTGT</div>
<div class="t" style="left:621.5px;top:641.44px;font-size:12px;line-height:14px;transform:scaleX(0.9167);transform-origin:0 0;font-weight:bold;">Chi phí mua hàng</div>
<div class="t" style="left:621.5px;top:667.44px;font-size:12px;line-height:14px;transform:scaleX(0.9167);transform-origin:0 0;font-weight:bold;">Tổng giá trị</div>
<div class="t" style="right:9px;top:615.34px;font-size:12px;line-height:14px;transform:scaleX(0.9167);transform-origin:100% 0;">35.500.000</div>
<div class="t" style="right:9px;top:641.44px;font-size:12px;line-height:14px;transform:scaleX(0.9167);transform-origin:100% 0;">0</div>
<div class="t" style="right:9px;top:667.44px;font-size:12px;line-height:14px;transform:scaleX(0.9167);transform-origin:100% 0;">355.000.000</div>
<div class="a" style="left:1px;top:686px;width:947px;height:23px;background:#AFC9E7;"></div>
<div class="a" style="left:0px;top:709px;width:949px;height:1px;background:#6797C8;"></div>
<svg class="a" style="left:937px;top:698px" width="10" height="10" viewBox="0 0 10 10"><rect x="8" y="0" width="2" height="2" fill="#3F5F80"/><rect x="4" y="4" width="2" height="2" fill="#3F5F80"/><rect x="8" y="4" width="2" height="2" fill="#3F5F80"/><rect x="0" y="8" width="2" height="2" fill="#3F5F80"/><rect x="4" y="8" width="2" height="2" fill="#3F5F80"/><rect x="8" y="8" width="2" height="2" fill="#3F5F80"/></svg>
</body></html>
